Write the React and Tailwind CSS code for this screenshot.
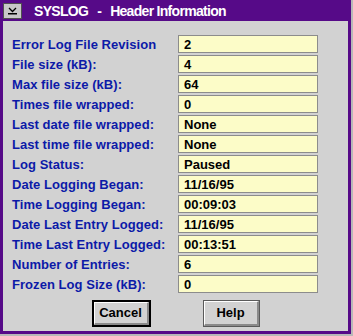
export default function App() {
  const rows = [
    ["Error Log File Revision", "2"],
    ["File size (kB):", "4"],
    ["Max file size (kB):", "64"],
    ["Times file wrapped:", "0"],
    ["Last date file wrapped:", "None"],
    ["Last time file wrapped:", "None"],
    ["Log Status:", "Paused"],
    ["Date Logging Began:", "11/16/95"],
    ["Time Logging Began:", "00:09:03"],
    ["Date Last Entry Logged:", "11/16/95"],
    ["Time Last Entry Logged:", "00:13:51"],
    ["Number of Entries:", "6"],
    ["Frozen Log Size (kB):", "0"],
  ];
  const font = { fontFamily: '"Liberation Sans", Arial, sans-serif' };
  return (
    <div className="w-[353px] h-[336px] bg-[#b8b8b8] pr-[2px] pb-[2px]" style={font}>
      <div className="w-[351px] h-[334px] bg-[#560a88] flex flex-col px-[3px] pb-[3px]">
        <div className="h-[21px] flex items-center shrink-0 -mx-[1px]">
          <div className="w-[19px] h-[16px] ml-[1px] bg-[#c8c8c8] border border-[#505050] flex items-center justify-center">
            <svg width="11" height="8" viewBox="0 0 11 8">
              <path d="M2 1 L5.5 4.5 L9 1" stroke="#000" strokeWidth="1.3" fill="none" />
              <rect x="1" y="6" width="9" height="1.5" fill="#000" />
            </svg>
          </div>
          <span className="ml-[12px] text-white font-bold text-[14px] leading-none tracking-[-0.7px]">
            SYSLOG<span className="inline-block w-[9px]" />-<span className="inline-block w-[9px]" />Header Information
          </span>
        </div>
        <div className="flex-1 bg-[#d2d2d2] pt-[14px] pl-[9px] flex flex-col">
          <div className="flex flex-col gap-[2px]">
            {rows.map(([label, value]) => (
              <div key={label} className="flex items-center h-[18px]">
                <div className="w-[166px] text-[#0c1aa8] font-bold text-[13px] leading-none tracking-[0.05px]">
                  {label}
                </div>
                <div className="w-[140px] h-[18px] bg-[#fcfcc8] border border-[#8c8c8c] flex items-center pl-[5px] text-black font-bold text-[13px] leading-none">
                  {value}
                </div>
              </div>
            ))}
          </div>
          <div className="flex justify-center gap-[52px] mt-[7px] -ml-[9px]">
            <div className="w-[59px] h-[27px] border-2 border-black bg-[#d2d2d2] flex items-center justify-center">
              <div className="w-full h-full border-t border-l border-white border-b-2 border-r-2 border-b-[#8a8a8a] border-r-[#8a8a8a] flex items-center justify-center text-black font-bold text-[13px]">
                Cancel
              </div>
            </div>
            <div className="w-[57px] h-[27px] border border-[#5a5a5a] bg-[#d2d2d2] flex items-center justify-center">
              <div className="w-full h-full border-t border-l border-white border-b-2 border-r-2 border-b-[#8a8a8a] border-r-[#8a8a8a] flex items-center justify-center text-black font-bold text-[13px]">
                Help
              </div>
            </div>
          </div>
        </div>
      </div>
    </div>
  );
}
